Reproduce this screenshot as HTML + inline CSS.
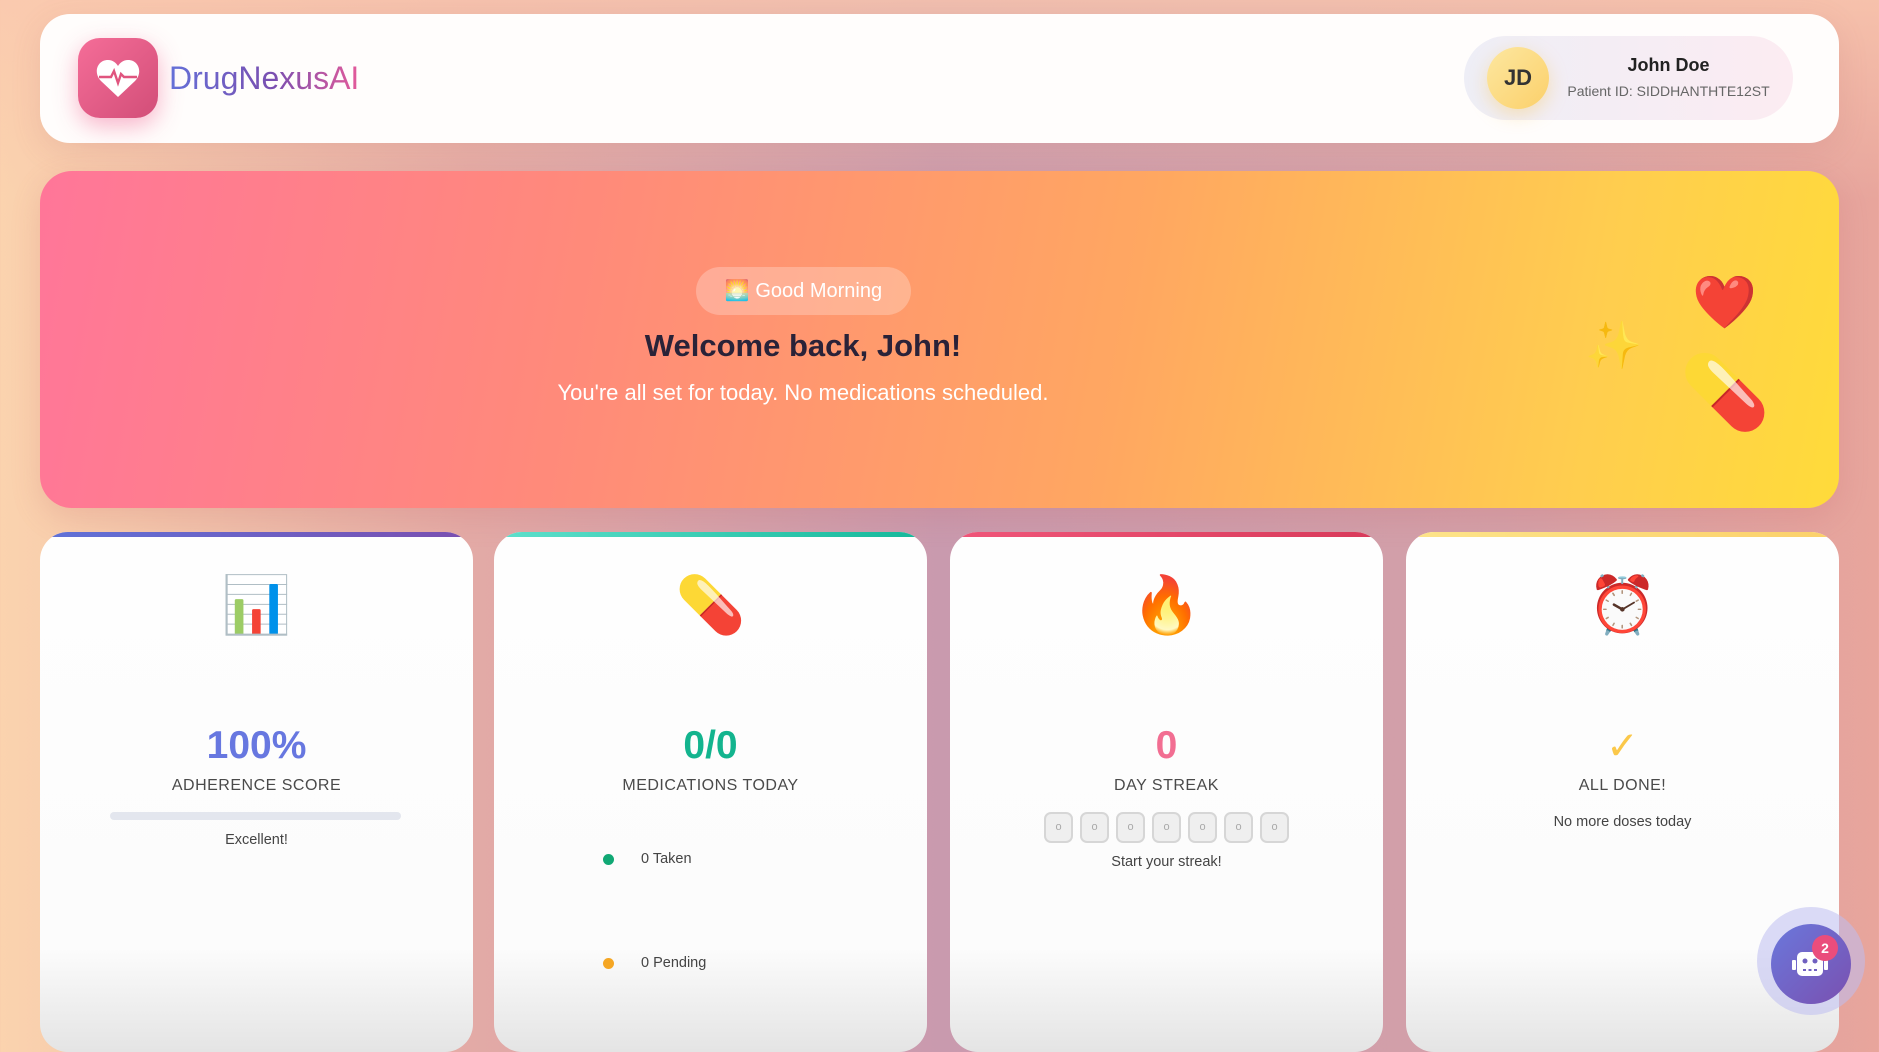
<!DOCTYPE html>
<html><head><meta charset="utf-8"><style>
*{margin:0;padding:0;box-sizing:border-box}
body{width:1879px;height:1029px;overflow:hidden;font-family:"Liberation Sans","DejaVu Sans",sans-serif;position:relative;
background:linear-gradient(90deg,#fbd3ae 0%,#e3aaa6 25%,#c99aae 50%,#d4a0a8 80%,#e8a59c 100%)}
.bgtop{position:absolute;left:0;top:0;width:100%;height:200px;background:linear-gradient(180deg,rgba(250,200,175,.8),rgba(250,200,175,0))}
.abs{position:absolute}
.header{left:40px;top:14px;width:1799px;height:129px;background:#fffdfc;border-radius:30px;box-shadow:0 8px 30px rgba(180,100,100,.15)}
.logo{left:78px;top:38px;width:80px;height:80px;border-radius:22px;background:linear-gradient(135deg,#f56d98,#d24e78);box-shadow:0 8px 24px rgba(240,90,140,.45)}
.brand{left:169px;top:60px;font-size:32px;font-weight:500;background:linear-gradient(90deg,#6470d8,#7a4fb0 55%,#e35a9a);-webkit-background-clip:text;color:transparent}
.pill{left:1464px;top:36px;width:329px;height:84px;border-radius:42px;background:linear-gradient(90deg,#eeeef6,#fcecf2)}
.av{left:1487px;top:47px;width:62px;height:62px;border-radius:50%;background:linear-gradient(135deg,#fde7a0,#fbd06a);box-shadow:0 6px 18px rgba(250,200,90,.4);font-size:22px;font-weight:600;color:#333;text-align:center;line-height:62px}
.hero{left:40px;top:171px;width:1799px;height:337px;border-radius:32px;background:linear-gradient(100deg,#ff7699 0%,#ff8a7a 30%,#ffa761 60%,#ffcd4f 85%,#ffdb3a 100%);box-shadow:0 10px 30px rgba(200,100,100,.2)}
.card{top:532px;height:520px;width:433px;border-radius:28px;background:linear-gradient(180deg,#fefefe 0%,#fcfcfc 80%,#e4e4e4 100%);overflow:hidden;text-align:center}
.bar{position:absolute;left:0;top:0;width:100%;height:5px}
.c{position:absolute;left:0;width:100%;text-align:center}
.big{top:192px;font-size:39px;font-weight:700}
.lbl{top:245px;font-size:16px;color:#4a4a4a;letter-spacing:.5px}
.sm{font-size:14.5px;color:#444}
.emoji{top:40px;font-size:56px}
.box{display:inline-block;width:29px;height:31px;border:2px solid #d6d6d6;background:#efefef;border-radius:7px;margin:0 3.5px;font-size:11px;color:#aaa;line-height:27px}
</style></head><body>
<div class="bgtop"></div>
<div class="abs header"></div>
<div class="abs logo"><svg width="80" height="80" viewBox="0 0 80 80"><path d="M40 59 L23 43 C15 35 19 22 30 22 C35 22 38 25 40 28 C42 25 45 22 50 22 C61 22 65 35 57 43 Z" fill="#fff"/><path d="M21 39 H33 L36 33 L40 45 L43 36 L46 39 H59" stroke="#e0557f" stroke-width="2.4" fill="none"/></svg></div>
<div class="abs brand">DrugNexusAI</div>
<div class="abs pill"></div>
<div class="abs av">JD</div>
<div class="abs" style="left:1566px;top:55px;width:205px;text-align:center;font-size:18px;font-weight:700;color:#222">John Doe</div>
<div class="abs" style="left:1566px;top:83px;width:205px;text-align:center;font-size:14px;color:#666">Patient ID: SIDDHANTHTE12ST</div>

<div class="abs hero"></div>
<div class="abs" style="left:696px;top:267px;width:215px;height:48px;border-radius:24px;background:rgba(255,255,255,.25);color:#fff;font-size:20px;text-align:center;line-height:48px">🌅 Good Morning</div>
<div class="abs" style="left:403px;top:328px;width:800px;text-align:center;font-size:31px;font-weight:700;color:#2a2238">Welcome back, John!</div>
<div class="abs" style="left:403px;top:380px;width:800px;text-align:center;font-size:22px;color:#fff">You're all set for today. No medications scheduled.</div>
<div class="abs" style="left:1692px;top:272px;font-size:52px">❤️</div>
<div class="abs" style="left:1585px;top:318px;font-size:46px;opacity:.8">✨</div>
<div class="abs" style="left:1680px;top:350px;font-size:72px">💊</div>

<div class="abs card" style="left:40px"><div class="bar" style="background:linear-gradient(90deg,#5f72d8,#7a4fb0)"></div>
<div class="c emoji">📊</div>
<div class="c big" style="color:#6777e0">100%</div>
<div class="c lbl">ADHERENCE SCORE</div>
<div style="position:absolute;left:70px;top:280px;width:291px;height:8px;border-radius:4px;background:#e3e6ee"></div>
<div class="c sm" style="top:300px">Excellent!</div></div>

<div class="abs card" style="left:494px"><div class="bar" style="background:linear-gradient(90deg,#5fe0cc,#14b89a)"></div>
<div class="c emoji">💊</div>
<div class="c big" style="color:#13b48e">0/0</div>
<div class="c lbl">MEDICATIONS TODAY</div>
<div style="position:absolute;left:109px;top:322px;width:11px;height:11px;border-radius:50%;background:#10a874"></div>
<div class="sm" style="position:absolute;left:147px;top:319px">0 Taken</div>
<div style="position:absolute;left:109px;top:426px;width:11px;height:11px;border-radius:50%;background:#f5a623"></div>
<div class="sm" style="position:absolute;left:147px;top:423px">0 Pending</div></div>

<div class="abs card" style="left:950px"><div class="bar" style="background:linear-gradient(90deg,#f0567a,#d83a5a)"></div>
<div class="c emoji">🔥</div>
<div class="c big" style="color:#f26e92">0</div>
<div class="c lbl">DAY STREAK</div>
<div class="c" style="top:280px"><span class="box">o</span><span class="box">o</span><span class="box">o</span><span class="box">o</span><span class="box">o</span><span class="box">o</span><span class="box">o</span></div>
<div class="c sm" style="top:322px">Start your streak!</div></div>

<div class="abs card" style="left:1406px"><div class="bar" style="background:linear-gradient(90deg,#fde48a,#fbd06a)"></div>
<div class="c emoji">⏰</div>
<div class="c big" style="color:#fbc84a">✓</div>
<div class="c lbl">ALL DONE!</div>
<div class="c sm" style="top:282px">No more doses today</div></div>

<div class="abs" style="left:1757px;top:907px;width:108px;height:108px;border-radius:50%;background:rgba(190,190,240,.55)"></div>
<div class="abs" style="left:1771px;top:924px;width:80px;height:80px;border-radius:50%;background:linear-gradient(135deg,#6a78dc,#7a50b0)"></div>
<div class="abs" style="left:1791px;top:944px"><svg width="40" height="40" viewBox="0 0 40 40"><rect x="6" y="8" width="26" height="24" rx="5" fill="#fff"/><rect x="1" y="16" width="4" height="10" rx="1" fill="#fff"/><rect x="33" y="16" width="4" height="10" rx="1" fill="#fff"/><circle cx="14" cy="17" r="2.5" fill="#7060c0"/><circle cx="24" cy="17" r="2.5" fill="#7060c0"/><rect x="12" y="25" width="3" height="2" fill="#7060c0"/><rect x="17.5" y="25" width="3" height="2" fill="#7060c0"/><rect x="23" y="25" width="3" height="2" fill="#7060c0"/></svg></div>
<div class="abs" style="left:1812px;top:935px;width:26px;height:26px;border-radius:50%;background:#ea4d7c;color:#fff;font-size:14px;font-weight:700;text-align:center;line-height:26px">2</div>
</body></html>
